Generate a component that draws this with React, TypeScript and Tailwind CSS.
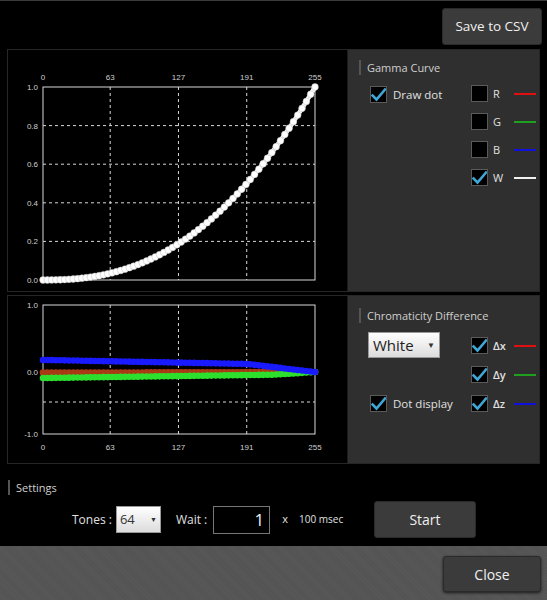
import React from "react";

const FONT = { fontFamily: '"Open Sans", "Noto Sans", sans-serif' };

function Check({ checked }: { checked: boolean }) {
  return (
    <div className="w-[17px] h-[17px] bg-black border border-[#5a5a5a] flex items-center justify-center shrink-0">
      {checked && (
        <svg width="15" height="15" viewBox="0 0 15 15">
          <path d="M1.5 8.5 L5.5 12.5 L14 2.5" fill="none" stroke="#3fa6d6" strokeWidth="2.6" strokeLinecap="square" />
        </svg>
      )}
    </div>
  );
}

function Swatch({ color }: { color: string }) {
  return <div className="w-[22px] h-[2px]" style={{ backgroundColor: color }} />;
}

function SectionTitle({ children }: { children: React.ReactNode }) {
  return (
    <div className="flex items-center gap-[6px]">
      <div className="w-[2px] h-[15px] bg-[#555]" />
      <span className="text-[11px] text-[#d0d0d0] leading-none">{children}</span>
    </div>
  );
}

const XT = [0, 63, 127, 191, 255];

function GammaChart() {
  const L = 35, R = 307, T = 37, B = 230;
  const xs = (t: number) => L + ((R - L) * t) / 255;
  const ys = (v: number) => B - (B - T) * v;
  const pts = Array.from({ length: 64 }, (_, i) => {
    const t = (i * 255) / 63;
    return { x: xs(t), y: ys(Math.pow(t / 255, 2.4)) };
  });
  return (
    <svg width="339" height="240" className="block">
      <g stroke="#d8d8d8" strokeWidth="1" strokeDasharray="3 3">
        {[63, 127, 191].map((t) => (
          <line key={t} x1={xs(t)} x2={xs(t)} y1={T} y2={B} />
        ))}
        {[0.2, 0.4, 0.6, 0.8].map((v) => (
          <line key={v} x1={L} x2={R} y1={ys(v)} y2={ys(v)} />
        ))}
      </g>
      <rect x={L} y={T} width={R - L} height={B - T} fill="none" stroke="#d8d8d8" strokeWidth="1" />
      <g fill="#d0d0d0" fontSize="8" fontFamily="Liberation Sans, sans-serif">
        {XT.map((t) => (
          <text key={t} x={xs(t)} y={30} textAnchor="middle">{t}</text>
        ))}
        {[0, 0.2, 0.4, 0.6, 0.8, 1].map((v) => (
          <text key={v} x={30} y={ys(v) + 3} textAnchor="end">{v.toFixed(1)}</text>
        ))}
      </g>
      <polyline points={pts.map((p) => `${p.x},${p.y}`).join(" ")} fill="none" stroke="#fff" strokeWidth="4.5" />
      {pts.map((p, i) => (
        <circle key={i} cx={p.x} cy={p.y} r="3.4" fill="#fff" stroke="#bbb" strokeWidth="0.5" />
      ))}
    </svg>
  );
}

function DiffChart() {
  const L = 35, R = 307, T = 9, B = 138, Z = 76;
  const xs = (t: number) => L + ((R - L) * t) / 255;
  const ys = (v: number) => Z - (Z - T) * v;
  const n = 64;
  const make = (f: (u: number) => number) =>
    Array.from({ length: n }, (_, i) => {
      const u = i / (n - 1);
      return { x: xs(u * 255), y: ys(f(u)) };
    });
  const red = make((u) => -0.01 + 0.01 * u);
  const green = make((u) => (u < 0.85 ? -0.09 + 0.05 * (u / 0.85) : -0.04 + 0.04 * ((u - 0.85) / 0.15)));
  const blue = make((u) => (u < 0.75 ? 0.18 - 0.06 * (u / 0.75) : 0.12 - 0.12 * ((u - 0.75) / 0.25)));
  const series: [typeof red, string][] = [
    [red, "#a83a14"],
    [green, "#2de02d"],
    [blue, "#1a1aff"],
  ];
  return (
    <svg width="339" height="167" className="block">
      <g stroke="#d8d8d8" strokeWidth="1" strokeDasharray="3 3">
        {[63, 127, 191].map((t) => (
          <line key={t} x1={xs(t)} x2={xs(t)} y1={T} y2={B} />
        ))}
        <line x1={L} x2={R} y1={106} y2={106} />
      </g>
      <rect x={L} y={T} width={R - L} height={B - T} fill="none" stroke="#d8d8d8" strokeWidth="1" />
      <g fill="#d0d0d0" fontSize="8" fontFamily="Liberation Sans, sans-serif">
        {XT.map((t) => (
          <text key={t} x={xs(t)} y={154} textAnchor="middle">{t}</text>
        ))}
        <text x={30} y={T + 3} textAnchor="end">1.0</text>
        <text x={30} y={Z + 3} textAnchor="end">0.0</text>
        <text x={30} y={B + 3} textAnchor="end">-1.0</text>
      </g>
      {series.map(([pts, c], k) => (
        <g key={k}>
          <polyline points={pts.map((p) => `${p.x},${p.y}`).join(" ")} fill="none" stroke={c} strokeWidth="5" />
          {pts.map((p, i) => (
            <circle key={i} cx={p.x} cy={p.y} r="3.3" fill={c} />
          ))}
        </g>
      ))}
    </svg>
  );
}

function ColorRow({ checked, label, color, bold }: { checked: boolean; label: string; color: string; bold?: boolean }) {
  return (
    <div className="flex items-center h-[17px]">
      <Check checked={checked} />
      <span className={`w-[26px] pl-[5px] text-[11px] text-[#e0e0e0] leading-none ${bold ? "font-semibold" : ""}`}>{label}</span>
      <Swatch color={color} />
    </div>
  );
}

export default function App() {
  return (
    <div className="w-[547px] h-[600px] bg-black flex flex-col overflow-hidden border-t border-[#3a3a3a]" style={FONT}>
      {/* header */}
      <div className="h-[48px] flex justify-end items-start pt-[7px] pr-[5px]">
        <button className="w-[100px] h-[37px] rounded-[3px] bg-[#3b3b3b] border border-[#2a2a2a] text-[#f0f0f0] text-[13.5px] shadow-[0_1px_2px_rgba(0,0,0,0.8)]">
          Save to CSV
        </button>
      </div>

      {/* panels */}
      <div className="px-[7px] flex flex-col gap-[3px]">
        <div className="h-[243px] border border-[#262626] flex">
          <div className="w-[340px] bg-black border-r border-[#1c1c1c]">
            <GammaChart />
          </div>
          <div className="flex-1 bg-[#2f2f2f] pt-[10px] pl-[11px]">
            <SectionTitle>Gamma Curve</SectionTitle>
            <div className="flex mt-[11px] pl-[11px]">
              <div className="w-[101px] flex items-center h-[17px]">
                <Check checked />
                <span className="pl-[6px] text-[11.5px] text-[#e0e0e0] leading-none">Draw dot</span>
              </div>
              <div className="flex flex-col gap-[11px] -mt-[1px]">
                <ColorRow checked={false} label="R" color="#e01010" />
                <ColorRow checked={false} label="G" color="#1fa01f" />
                <ColorRow checked={false} label="B" color="#1010e0" />
                <ColorRow checked label="W" color="#f0f0f0" />
              </div>
            </div>
          </div>
        </div>

        <div className="h-[169px] border border-[#262626] flex">
          <div className="w-[340px] bg-black border-r border-[#1c1c1c]">
            <DiffChart />
          </div>
          <div className="flex-1 bg-[#2f2f2f] pt-[12px] pl-[11px]">
            <SectionTitle>Chromaticity Difference</SectionTitle>
            <div className="flex mt-[9px] pl-[9px]">
              <div className="w-[103px] flex flex-col justify-between h-[80px]">
                <div className="w-[72px] h-[26px] bg-gradient-to-b from-[#ffffff] to-[#dcdcdc] border border-[#999] flex items-center justify-between px-[4px]">
                  <span className="text-[15px] text-[#222] leading-none">White</span>
                  <span className="text-[8px] text-[#333] leading-none">▼</span>
                </div>
                <div className="flex items-center h-[17px] pl-[2px]">
                  <Check checked />
                  <span className="pl-[6px] text-[11.5px] text-[#e0e0e0] leading-none">Dot display</span>
                </div>
              </div>
              <div className="flex flex-col gap-[12px] pt-[5px]">
                <ColorRow checked label="Δx" color="#e01010" bold />
                <ColorRow checked label="Δy" color="#1fa01f" bold />
                <ColorRow checked label="Δz" color="#1010e0" bold />
              </div>
            </div>
          </div>
        </div>
      </div>

      {/* settings */}
      <div className="flex-1 flex flex-col pt-[16px] pl-[8px]">
        <SectionTitle>Settings</SectionTitle>
        <div className="flex items-center mt-[6px] pl-[64px] h-[37px]">
          <span className="text-[12px] text-[#e0e0e0] whitespace-nowrap">Tones :</span>
          <div className="ml-[4px] w-[45px] h-[27px] bg-gradient-to-b from-[#ffffff] to-[#dcdcdc] border border-[#999] flex items-center justify-between px-[3px]">
            <span className="text-[13px] text-[#333] leading-none">64</span>
            <span className="text-[7px] text-[#333] leading-none">▼</span>
          </div>
          <span className="ml-[15px] text-[12px] text-[#e0e0e0] whitespace-nowrap">Wait :</span>
          <div className="ml-[6px] w-[57px] h-[28px] bg-black border border-[#777] flex items-center justify-end pr-[5px]">
            <span className="text-[17px] text-[#f0f0f0] leading-none">1</span>
          </div>
          <span className="ml-[12px] text-[11px] text-[#e0e0e0]">x</span>
          <span className="ml-[11px] w-[40px] text-[10px] text-[#e0e0e0] whitespace-nowrap">100 msec</span>
          <button className="ml-[35px] w-[102px] h-[37px] rounded-[3px] bg-[#3b3b3b] border border-[#2a2a2a] text-[#f0f0f0] text-[14px]">
            Start
          </button>
        </div>
      </div>

      {/* footer */}
      <div className="h-[54px] shrink-0 bg-[#565656] bg-[repeating-linear-gradient(45deg,#585858_0px,#585858_1px,#535353_1px,#535353_2px)] flex justify-end items-start pt-[10px] pr-[6px]">
        <button className="w-[98px] h-[36px] rounded-[3px] bg-[#3b3b3b] border border-[#2a2a2a] text-[#f0f0f0] text-[14px] shadow-[0_1px_3px_rgba(0,0,0,0.7)]">
          Close
        </button>
      </div>
    </div>
  );
}
